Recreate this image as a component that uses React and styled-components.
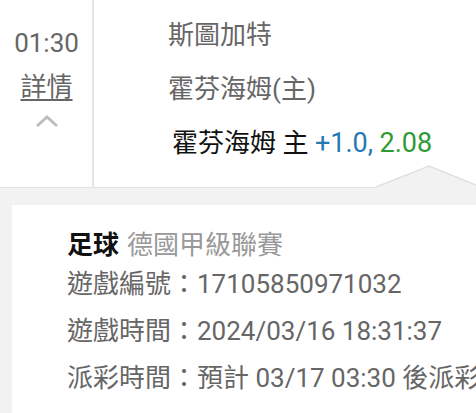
import React from 'react';
import styled, { createGlobalStyle } from 'styled-components';

const Global = createGlobalStyle`
	html, body {
		margin: 0;
		padding: 0;
		background: #f2f2f2;
		overflow: hidden;
	}
	body {
		font-family: Roboto, "Noto Sans CJK TC", sans-serif;
		font-size: 26px;
	}
`;

const Page = styled.div`
	width: 476px;
	height: 413px;
	overflow: hidden;
`;

const Match = styled.div`
	position: relative;
	display: flex;
	height: 187px;
	background: #fff;
	border-bottom: 1px solid #e3e3e3;
`;

const TimeCol = styled.div`
	width: 94px;
	border-right: 2px solid #e6e6e6;
	display: flex;
	flex-direction: column;
	align-items: center;
	padding-top: 28px;
	padding-left: 1px;
	box-sizing: border-box;
`;

const Time = styled.div`
	color: #666;
	line-height: 30px;
	font-size: 26px;
`;

const Detail = styled.div`
	margin-top: 14px;
	color: #666;
	line-height: 30px;
	text-decoration: underline;
	text-decoration-thickness: 1.5px;
	text-underline-offset: 3px;
`;

const Chevron = styled.svg`
	margin-top: 12px;
	display: block;
`;

const Teams = styled.div`
	flex: 1;
	padding: 8px 0 0 74px;
`;

const Team = styled.div`
	line-height: 54px;
	color: ${(p) => (p.$pick ? '#111' : '#666')};
	padding-left: ${(p) => (p.$pick ? '4px' : '0')};
	white-space: nowrap;
`;

const Odd = styled.span`
	color: ${(p) => p.$color};
	font-size: 27px;
`;

const Notch = styled.svg`
	position: absolute;
	right: 0;
	bottom: -1px;
	display: block;
`;

const Card = styled.div`
	margin: 17px 0 0 12px;
	background: #fff;
	height: 220px;
	padding: 24px 0 0 55px;
	box-sizing: border-box;
	white-space: nowrap;
`;

const Title = styled.div`
	line-height: 32px;
`;

const Sport = styled.span`
	color: #111;
	font-weight: bold;
	margin-right: 8px;
`;

const League = styled.span`
	color: #999;
`;

const Row = styled.div`
	color: #666;
	line-height: 47px;
`;

const App = () => {
	return (
		<Page>
			<Global />
			<Match>
				<TimeCol>
					<Time>01:30</Time>
					<Detail>詳情</Detail>
					<Chevron width="24" height="14" viewBox="0 0 24 14">
						<polyline points="2,12 12,3 22,12" fill="none" stroke="#bdbdbd" strokeWidth="3" />
					</Chevron>
				</TimeCol>
				<Teams>
					<Team>斯圖加特</Team>
					<Team>霍芬海姆(主)</Team>
					<Team $pick>
						霍芬海姆 主 <Odd $color="#2479b5">+1.0,</Odd> <Odd $color="#2e9b35">2.08</Odd>
					</Team>
				</Teams>
				<Notch width="100" height="24" viewBox="0 0 100 24">
					<polygon points="0,24 0,23 53,2 100,21 100,24" fill="#f2f2f2" />
					<polyline points="0,23 53,2 100,21" fill="none" stroke="#e0e0e0" strokeWidth="1.5" />
				</Notch>
			</Match>
			<Card>
				<Title>
					<Sport>足球</Sport>
					<League>德國甲級聯賽</League>
				</Title>
				<Row>遊戲編號：17105850971032</Row>
				<Row>遊戲時間：2024/03/16 18:31:37</Row>
				<Row>派彩時間：預計 03/17 03:30 後派彩</Row>
			</Card>
		</Page>
	);
};

export default App;
